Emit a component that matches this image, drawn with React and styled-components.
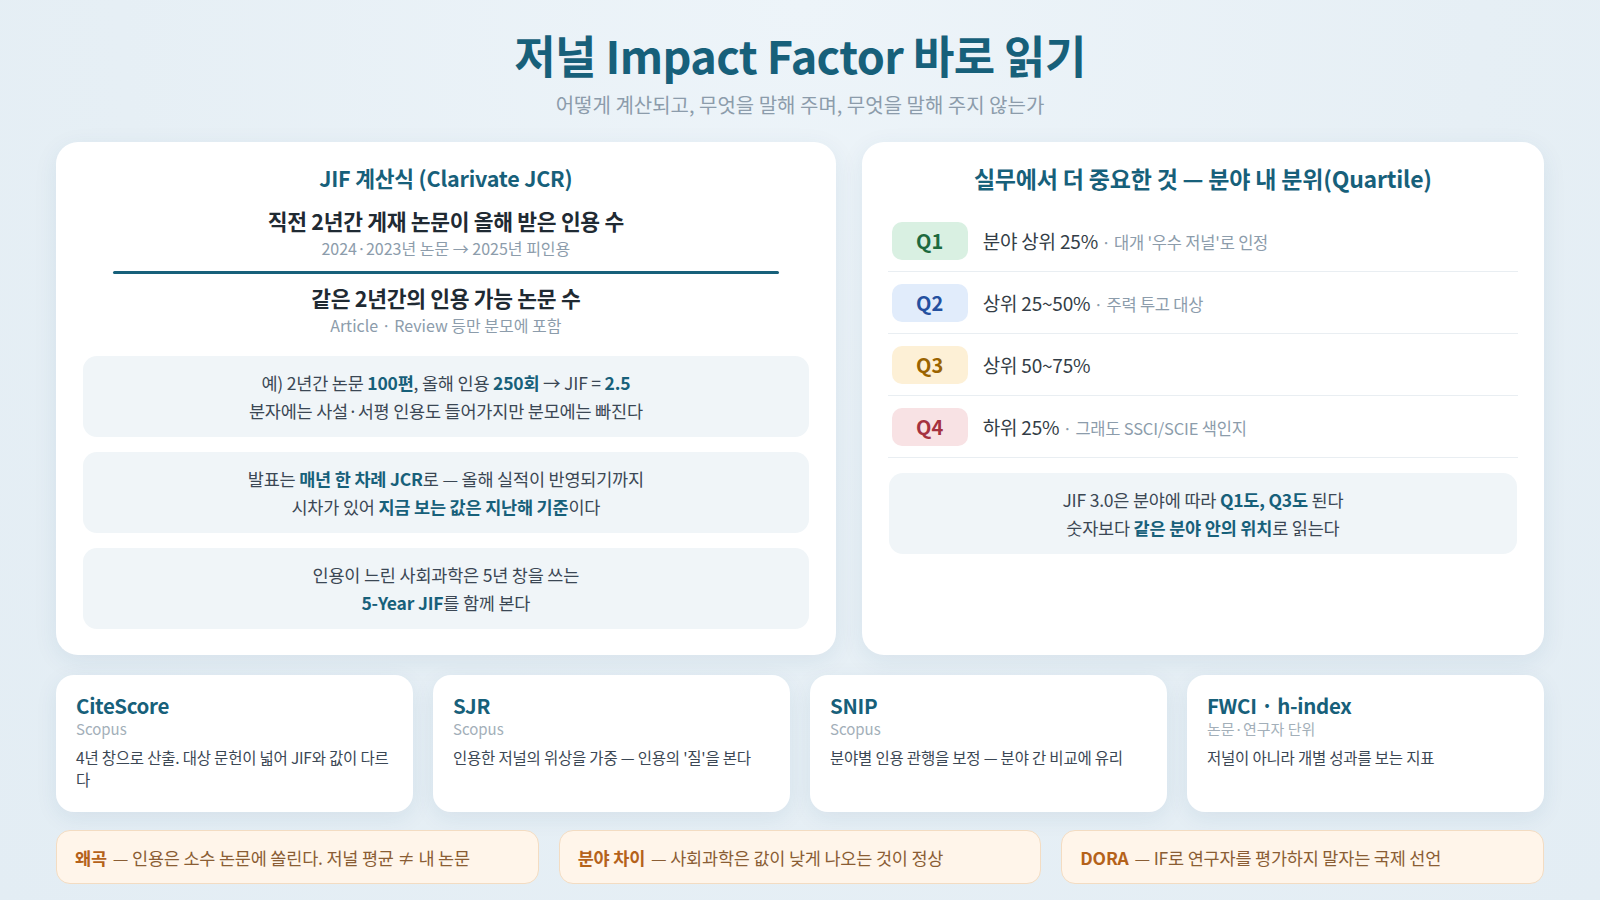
import React from "react"
import styled, { createGlobalStyle } from "styled-components"

const GlobalStyle = createGlobalStyle`
  * { box-sizing: border-box; }
  html, body { margin: 0; padding: 0; }
  body {
    font-family: "Noto Sans CJK KR", "Noto Sans", sans-serif;
    background: #e7f0f6;
    color: #2d3a45;
  }
`

const TEAL = "#17607a"

const Page = styled.div`
  min-height: 100vh;
  padding: 28px 56px 16px;
  display: flex;
  flex-direction: column;
  background: radial-gradient(ellipse at 50% 0%, #edf4f9 0%, #e6eff5 60%, #e3edf4 100%);
`

const Header = styled.header`
  text-align: center;
  margin-bottom: 24px;
`

const Title = styled.h1`
  margin: 0;
  font-size: 45px;
  line-height: 54px;
  font-weight: 700;
  color: ${TEAL};
  letter-spacing: -0.6px;
`

const Subtitle = styled.p`
  margin: 10px 0 0;
  font-size: 20px;
  line-height: 26px;
  color: #8c9cab;
`

const MainRow = styled.div`
  display: grid;
  grid-template-columns: 8fr 7fr;
  gap: 26px;
`

const Card = styled.section`
  background: #fff;
  border-radius: 22px;
  box-shadow: 0 6px 24px rgba(30, 80, 110, 0.08);
  padding: 21px 27px 26px;
`

const CardTitle = styled.h2`
  margin: 0;
  text-align: center;
  font-size: ${({ $size }) => $size || 22}px;
  line-height: 30px;
  font-weight: 700;
  color: ${TEAL};
  letter-spacing: -0.2px;
`

const Fraction = styled.div`
  text-align: center;
  margin-top: 13px;
`

const Term = styled.div`
  font-size: 21.5px;
  line-height: 30px;
  font-weight: 700;
  color: #1f2a33;
  letter-spacing: -0.3px;
`

const TermNote = styled.div`
  margin-top: 1px;
  font-size: 16px;
  line-height: 23px;
  color: #8c9cab;
`

const Divider = styled.div`
  height: 3px;
  background: ${TEAL};
  border-radius: 2px;
  margin: 11px 30px 9px;
`

const InfoList = styled.div`
  display: flex;
  flex-direction: column;
  gap: 15px;
  margin-top: ${({ $top }) => $top || 0}px;
`

const InfoBox = styled.div`
  background: #f0f5f8;
  border-radius: 14px;
  padding: 13px 20px;
  text-align: center;
  font-size: 17.5px;
  line-height: 27.5px;
  color: #3b4754;
  letter-spacing: -0.2px;

  b {
    color: ${TEAL};
    font-weight: 700;
  }
`

const QuartileList = styled.div`
  margin-top: 17px;
  margin-left: -1px;
  margin-right: -1px;
`

const QRow = styled.div`
  display: flex;
  align-items: center;
  gap: 15px;
  padding: 11.5px 4px;
  border-bottom: 1px solid #e9eef2;
`

const QBadge = styled.span`
  width: 76px;
  height: 38px;
  border-radius: 10px;
  display: flex;
  align-items: center;
  justify-content: center;
  font-size: 20px;
  font-weight: 700;
  background: ${({ $bg }) => $bg};
  color: ${({ $fg }) => $fg};
`

const QText = styled.span`
  font-size: 19px;
  color: #333d46;
  letter-spacing: -0.2px;
`

const QNote = styled.span`
  font-size: 16.5px;
  color: #8c9cab;
`

const MetricRow = styled.div`
  display: grid;
  grid-template-columns: repeat(4, 1fr);
  gap: 20px;
  margin-top: 20px;
`

const MetricCard = styled.div`
  background: #fff;
  border-radius: 18px;
  box-shadow: 0 6px 22px rgba(30, 80, 110, 0.08);
  padding: 16px 20px;
  min-height: 137px;
`

const MetricName = styled.div`
  font-size: 20.5px;
  line-height: 28px;
  font-weight: 700;
  color: ${TEAL};
  letter-spacing: -0.3px;
`

const MetricSource = styled.div`
  font-size: 15px;
  line-height: 20px;
  color: #a3afb9;
`

const MetricDesc = styled.div`
  margin-top: 7px;
  font-size: 15.5px;
  line-height: 22px;
  color: #3b4754;
  letter-spacing: -0.2px;
`

const WarnRow = styled.div`
  display: grid;
  grid-template-columns: repeat(3, 1fr);
  gap: 20px;
  margin-top: 18px;
`

const Warn = styled.div`
  height: 54px;
  display: flex;
  align-items: center;
  padding: 0 18px;
  background: #fff5ea;
  border: 1px solid #f3dcc2;
  border-radius: 14px;
  font-size: 17.5px;
  color: #8a5d34;
  letter-spacing: -0.2px;

  b {
    color: #b5621a;
    font-weight: 700;
    margin-right: 6px;
  }
`

const quartiles = [
  { q: "Q1", bg: "#d9f0e2", fg: "#1d6a3e", text: "분야 상위 25%", note: "대개 '우수 저널'로 인정" },
  { q: "Q2", bg: "#e1ecfb", fg: "#24509f", text: "상위 25~50%", note: "주력 투고 대상" },
  { q: "Q3", bg: "#fdf0d6", fg: "#9a6300", text: "상위 50~75%" },
  { q: "Q4", bg: "#f8e2e4", fg: "#a5323f", text: "하위 25%", note: "그래도 SSCI/SCIE 색인지" },
]

const metrics = [
  { name: "CiteScore", source: "Scopus", desc: "4년 창으로 산출. 대상 문헌이 넓어 JIF와 값이 다르다" },
  { name: "SJR", source: "Scopus", desc: "인용한 저널의 위상을 가중 — 인용의 '질'을 본다" },
  { name: "SNIP", source: "Scopus", desc: "분야별 인용 관행을 보정 — 분야 간 비교에 유리" },
  { name: "FWCI · h-index", source: "논문·연구자 단위", desc: "저널이 아니라 개별 성과를 보는 지표" },
]

const warnings = [
  { key: "왜곡", text: "— 인용은 소수 논문에 쏠린다. 저널 평균 ≠ 내 논문" },
  { key: "분야 차이", text: "— 사회과학은 값이 낮게 나오는 것이 정상" },
  { key: "DORA", text: "— IF로 연구자를 평가하지 말자는 국제 선언" },
]

const App = () => {
  return (
    <Page>
      <GlobalStyle />
      <Header>
        <Title>저널 Impact Factor 바로 읽기</Title>
        <Subtitle>어떻게 계산되고, 무엇을 말해 주며, 무엇을 말해 주지 않는가</Subtitle>
      </Header>

      <MainRow>
        <Card>
          <CardTitle $size={21.5}>JIF 계산식 (Clarivate JCR)</CardTitle>
          <Fraction>
            <Term>직전 2년간 게재 논문이 올해 받은 인용 수</Term>
            <TermNote>2024·2023년 논문 → 2025년 피인용</TermNote>
            <Divider />
            <Term>같은 2년간의 인용 가능 논문 수</Term>
            <TermNote>Article · Review 등만 분모에 포함</TermNote>
          </Fraction>
          <InfoList $top={19}>
            <InfoBox>
              예) 2년간 논문 <b>100편</b>, 올해 인용 <b>250회</b> → JIF = <b>2.5</b>
              <br />
              분자에는 사설·서평 인용도 들어가지만 분모에는 빠진다
            </InfoBox>
            <InfoBox>
              발표는 <b>매년 한 차례 JCR</b>로 — 올해 실적이 반영되기까지
              <br />
              시차가 있어 <b>지금 보는 값은 지난해 기준</b>이다
            </InfoBox>
            <InfoBox>
              인용이 느린 사회과학은 5년 창을 쓰는
              <br />
              <b>5-Year JIF</b>를 함께 본다
            </InfoBox>
          </InfoList>
        </Card>

        <Card>
          <CardTitle $size={23}>실무에서 더 중요한 것 — 분야 내 분위(Quartile)</CardTitle>
          <QuartileList>
            {quartiles.map((item) => (
              <QRow key={item.q}>
                <QBadge $bg={item.bg} $fg={item.fg}>{item.q}</QBadge>
                <QText>
                  {item.text}
                  {item.note && <QNote> · {item.note}</QNote>}
                </QText>
              </QRow>
            ))}
          </QuartileList>
          <InfoList $top={15}>
            <InfoBox>
              JIF 3.0은 분야에 따라 <b>Q1도, Q3도</b> 된다
              <br />
              숫자보다 <b>같은 분야 안의 위치</b>로 읽는다
            </InfoBox>
          </InfoList>
        </Card>
      </MainRow>

      <MetricRow>
        {metrics.map((m) => (
          <MetricCard key={m.name}>
            <MetricName>{m.name}</MetricName>
            <MetricSource>{m.source}</MetricSource>
            <MetricDesc>{m.desc}</MetricDesc>
          </MetricCard>
        ))}
      </MetricRow>

      <WarnRow>
        {warnings.map((w) => (
          <Warn key={w.key}>
            <b>{w.key}</b>
            {w.text}
          </Warn>
        ))}
      </WarnRow>
    </Page>
  )
}

export default App
